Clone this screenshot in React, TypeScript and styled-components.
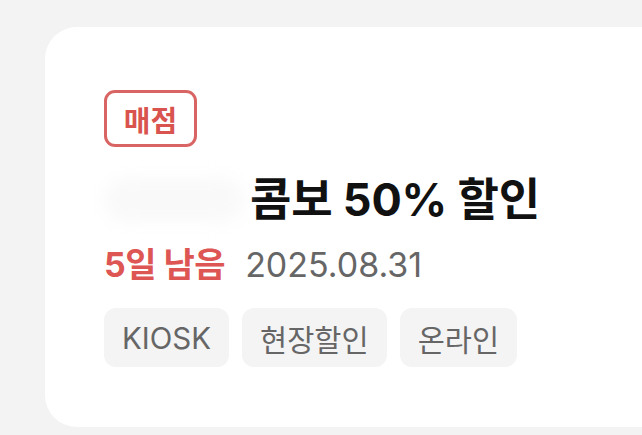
import styled, { createGlobalStyle } from "styled-components";

const GlobalStyle = createGlobalStyle`
  html, body {
    margin: 0;
    padding: 0;
    background-color: #f3f3f3;
    font-family: "Inter", "Noto Sans CJK KR", "Noto Sans", sans-serif;
    overflow: hidden;
  }
`;

const Page = styled.div`
  width: 642px;
  height: 435px;
  padding: 27px 0 0 45px;
  box-sizing: border-box;
  overflow: hidden;
`;

const Card = styled.div`
  width: 680px;
  height: 400px;
  box-sizing: border-box;
  padding: 63px 0 0 59px;
  background-color: #ffffff;
  border-radius: 32px;
  display: flex;
  flex-direction: column;
  align-items: flex-start;
`;

const StoreBadge = styled.div`
  width: 93px;
  height: 57px;
  box-sizing: border-box;
  border: 3px solid #d86563;
  border-radius: 11px;
  display: flex;
  align-items: center;
  justify-content: center;
  color: #d9534f;
  font-size: 29px;
  font-weight: 700;
`;

const TitleRow = styled.div`
  margin-top: 25px;
  display: flex;
  align-items: center;
  gap: 6px;
  height: 56px;
`;

const HiddenBrand = styled.div`
  width: 140px;
  height: 44px;
  border-radius: 22px;
  background-color: #f9f9f9;
  filter: blur(8px);
`;

const Title = styled.h1`
  margin: 0;
  font-size: 45px;
  line-height: 56px;
  font-weight: 700;
  color: #111111;
  letter-spacing: -0.2px;
`;

const DateRow = styled.div`
  margin-top: 17px;
  display: flex;
  align-items: center;
  gap: 20px;
  font-size: 34px;
  line-height: 40px;
`;

const Remaining = styled.span`
  color: #dd5653;
  font-weight: 700;
  letter-spacing: -0.5px;
`;

const EndDate = styled.span`
  color: #666666;
  font-weight: 400;
`;

const ChipList = styled.div`
  margin-top: 23px;
  display: flex;
  gap: 13px;
`;

const Chip = styled.div`
  height: 59px;
  padding: 0 18px;
  box-sizing: border-box;
  display: flex;
  align-items: center;
  background-color: #f4f4f4;
  border-radius: 12px;
  color: #666666;
  font-size: 29.5px;
  font-weight: 400;
`;

const channels = ["KIOSK", "현장할인", "온라인"];

function App() {
  return (
    <>
      <GlobalStyle />
      <Page>
        <Card>
          <StoreBadge>매점</StoreBadge>
          <TitleRow>
            <HiddenBrand />
            <Title>콤보 50% 할인</Title>
          </TitleRow>
          <DateRow>
            <Remaining>5일 남음</Remaining>
            <EndDate>2025.08.31</EndDate>
          </DateRow>
          <ChipList>
            {channels.map((c) => (
              <Chip key={c}>{c}</Chip>
            ))}
          </ChipList>
        </Card>
      </Page>
    </>
  );
}

export default App;
